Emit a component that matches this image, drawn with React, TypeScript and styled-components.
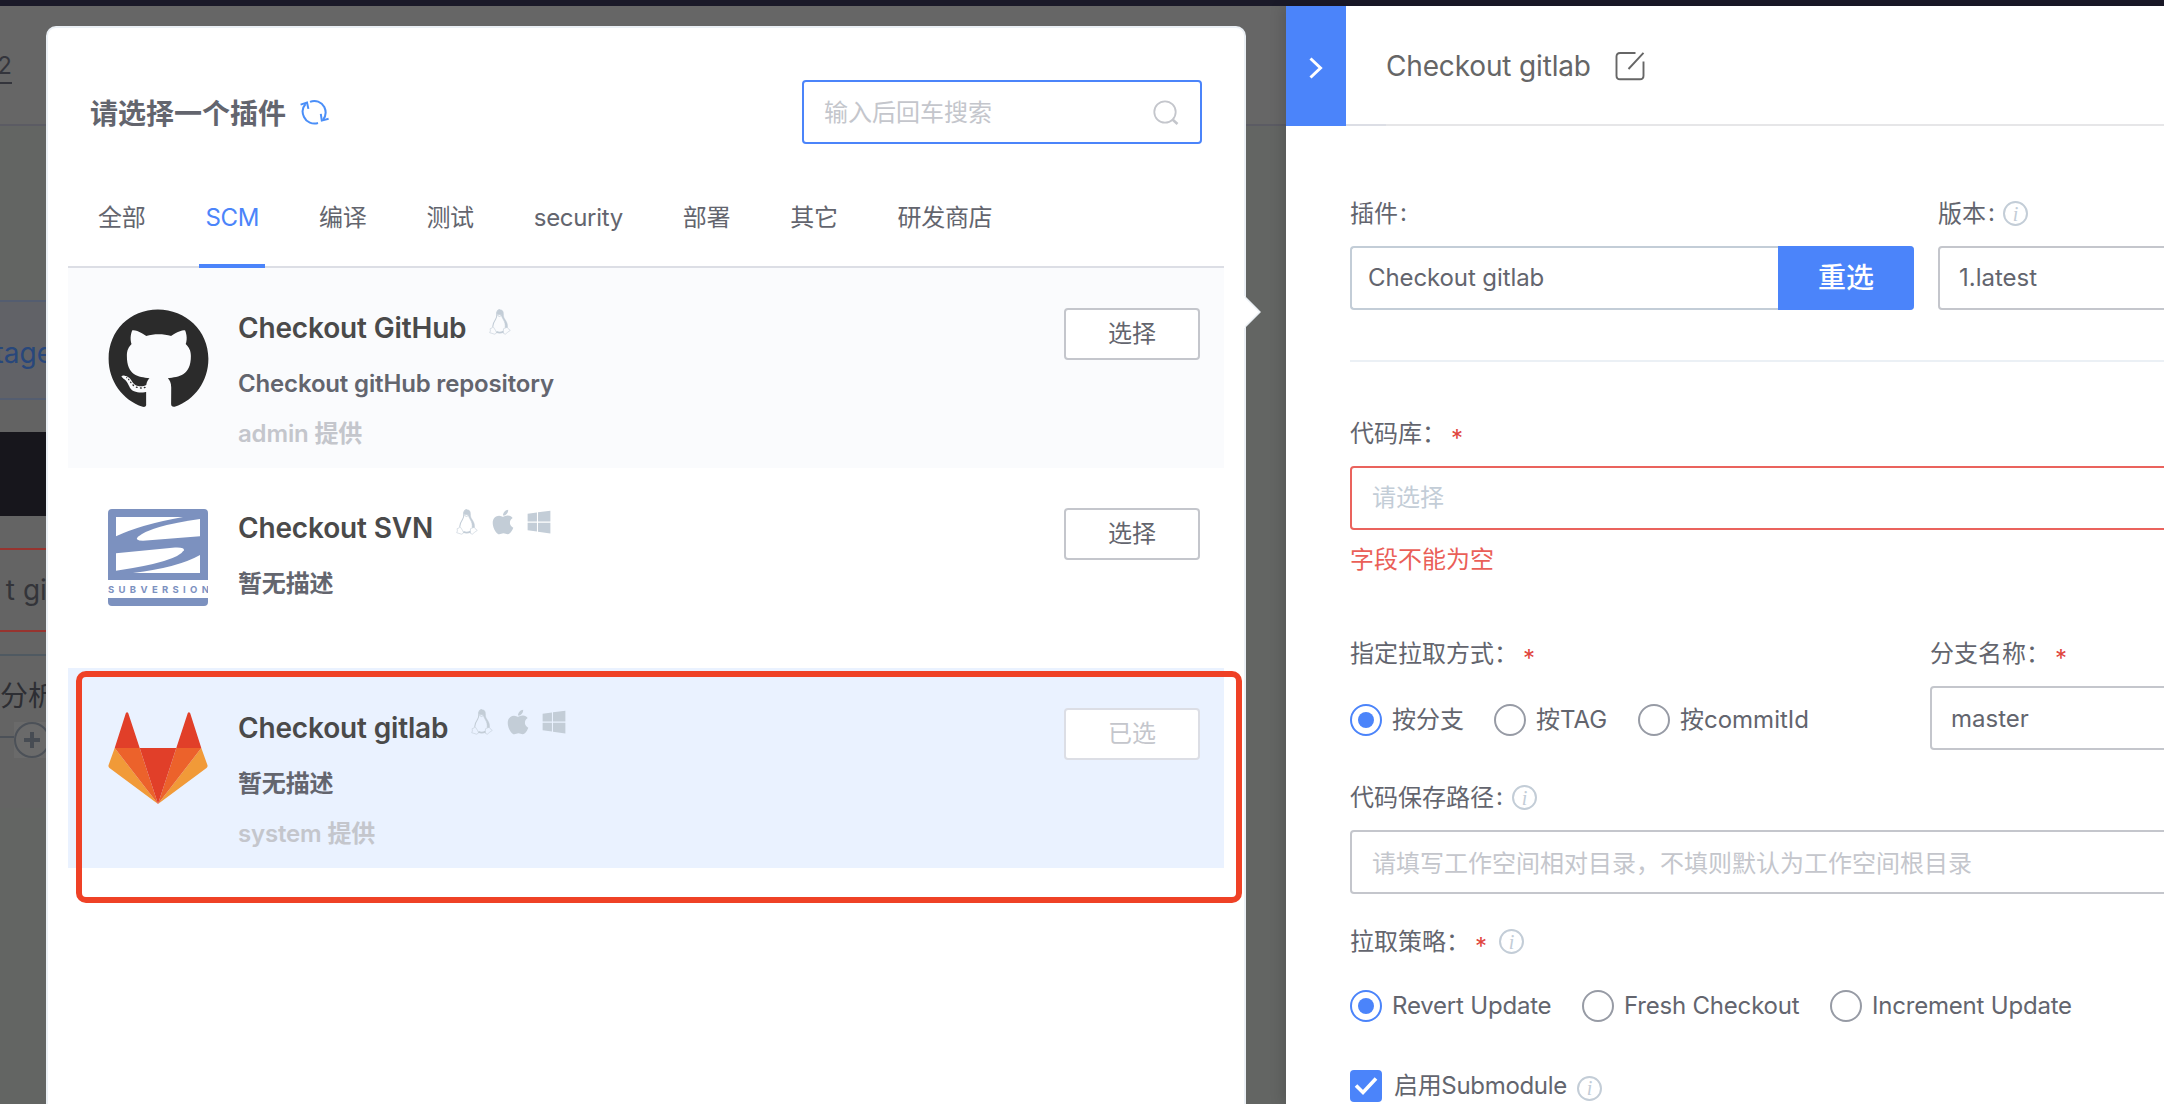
import React from "react";
import styled, { createGlobalStyle, css } from "styled-components";
import { FaApple, FaGithub, FaWindows } from "react-icons/fa";

const GlobalStyle = createGlobalStyle`
  *, *::before, *::after { box-sizing: border-box; }
  html, body { margin: 0; padding: 0; }
  body {
    font-family: Inter, "Noto Sans CJK SC", sans-serif;
    font-size: 24px;
    line-height: 24px;
    color: #63656e;
    overflow: hidden;
  }
`;

const Screen = styled.div`
  position: relative;
  width: 2164px;
  height: 1104px;
  overflow: hidden;
  background: #636563;
`;

const TopBar = styled.div`
  height: 6px;
  background: #1a1928;
`;

/* ---------- dimmed pipeline page ---------- */

const PageHeader = styled.div`
  height: 120px;
  background: #666666;
  border-bottom: 2px solid #5b5b63;
  padding-top: 46px;
`;

const PageTab = styled.span`
  display: flex;
  justify-content: flex-end;
  width: 12px;
  height: 32px;
  line-height: 27px;
  color: #34353c;
  border-bottom: 2px solid #34353c;
`;

const PageBody = styled.div`
  width: 46px;
  overflow: hidden;
  white-space: nowrap;
  font-size: 28px;
  padding-top: 174px;
`;

const Clip = styled.div`
  display: flex;
  justify-content: flex-end;
  align-items: center;
`;

const StageName = styled(Clip)`
  height: 100px;
  background: #616267;
  border: solid #545d70;
  border-width: 2px 0;
  padding-top: 6px;
  color: #28477b;
  margin-right: -7px;
`;

const StageGap = styled.div`
  height: 32px;
  background: #636363;
`;

const JobHead = styled.div`
  height: 84px;
  background: #17161c;
`;

const StageArea = styled.div`
  height: 292px;
  padding-top: 32px;
  background: #646464;
`;

const AtomFail = styled(Clip)`
  height: 84px;
  border: solid #97342f;
  border-width: 2px 0;
  color: #333439;
  margin-right: -10px;
`;

const AtomNext = styled.div`
  margin-top: 22px;
  border-top: 2px solid #4f5961;
  height: 68px;
  line-height: 80px;
  color: #2d2e33;
`;

const AddRow = styled.div`
  display: flex;
  align-items: center;
  height: 36px;
`;

const AddLine = styled.div`
  flex: none;
  width: 14px;
  height: 2px;
  margin-top: -6px;
  background: #4c5158;
`;

/* ---------- plugin selector popup ---------- */

const Popup = styled.section`
  position: absolute;
  left: 46px;
  top: 26px;
  width: 1200px;
  height: 1100px;
  padding: 52px 20px 0;
  background: #fff;
  border: 2px solid #ebf0f5;
  border-radius: 10px;
`;

const PopupArrow = styled.svg`
  position: absolute;
  right: -17px;
  top: 268px;
`;

const PopupHeader = styled.header`
  display: flex;
  align-items: center;
  height: 64px;
  padding: 0 22px 0 22px;
`;

const PopupTitle = styled.h3`
  margin: 0 14px 0 0;
  padding-top: 4px;
  font-size: 28px;
  line-height: 36px;
  font-weight: 700;
`;

const RefreshIcon = styled.svg`
  margin-top: 1px;
`;

const SearchBox = styled.div`
  display: flex;
  align-items: center;
  justify-content: space-between;
  width: 400px;
  height: 64px;
  margin-left: auto;
  padding: 2px 21px 0 20px;
  border: 2px solid #4b84fa;
  border-radius: 4px;
  color: #c4c6cc;
`;

const Tabs = styled.nav`
  display: flex;
  gap: 48px;
  height: 124px;
  padding: 24px 0 0 24px;
  border-bottom: 2px solid #dcdee5;
`;

const Tab = styled.div<{ $active?: boolean }>`
  display: flex;
  align-items: center;
  justify-content: center;
  height: 100px;
  padding: 4px 6px 0;
  letter-spacing: -0.32px;
  border-bottom: 4px solid ${(p) => (p.$active ? "#4b84fa" : "transparent")};
  color: ${(p) => (p.$active ? "#4b84fa" : "#63656e")};
`;

const Item = styled.article<{ $tone: string }>`
  display: flex;
  height: 200px;
  padding: 40px 24px 0 40px;
  background: ${(p) => p.$tone};
`;

const LogoBox = styled.div`
  width: 100px;
  height: 100px;
  display: flex;
  align-items: flex-start;
  justify-content: center;
`;

const ItemBody = styled.div`
  display: flex;
  flex-direction: column;
  flex: 1;
  padding: 3px 0 0 30px;
  font-weight: 600;
  letter-spacing: -0.16px;
`;

const ItemTitle = styled.div`
  display: flex;
  height: 34px;
  font-size: 28px;
  line-height: 34px;
  color: #4a4a4a;
`;

const OsIcons = styled.span`
  display: flex;
  gap: 12px;
  margin: -2px 0 0 22px;
  color: #c3cdd7;
`;

const OsSlot = styled.span`
  display: flex;
  align-items: center;
  justify-content: center;
  width: 24px;
  height: 26px;
`;

const ItemDesc = styled.div`
  margin-top: 27px;
  height: 24px;
`;

const ItemAuthor = styled.div`
  margin-top: 26px;
  height: 24px;
  color: #c4c6cc;
`;

const SelectButton = styled.button<{ $chosen?: boolean }>`
  width: 136px;
  height: 52px;
  padding: 0;
  font: inherit;
  background: #fff;
  border: 2px solid ${(p) => (p.$chosen ? "#dcdee5" : "#c4c6cc")};
  border-radius: 4px;
  color: ${(p) => (p.$chosen ? "#c4c6cc" : "#63656e")};
`;

const Highlight = styled.div`
  position: absolute;
  left: 76px;
  top: 671px;
  width: 1166px;
  height: 232px;
  border: 6px solid #ef4126;
  border-radius: 10px;
`;

/* ---------- right drawer ---------- */

const Drawer = styled.aside`
  position: absolute;
  left: 1286px;
  top: 6px;
  width: 1280px;
  height: 1098px;
  background: #fff;
  box-shadow: -4px 0 12px rgba(0, 0, 0, 0.13);
`;

const DrawerHeader = styled.header`
  display: flex;
  height: 120px;
`;

const Collapse = styled.div`
  display: flex;
  align-items: center;
  justify-content: center;
  width: 60px;
  padding-top: 3px;
  background: #4b84fa;
`;

const HeaderLead = styled.div`
  width: 40px;
  border-bottom: 2px solid #dcdee5;
`;

const HeaderTitle = styled.div`
  display: flex;
  align-items: center;
  flex: 1;
  gap: 24px;
  padding-top: 2px;
  border-bottom: 2px solid #e6e6e8;
  font-size: 28px;
  letter-spacing: -0.16px;
  color: #666;
`;

const Form = styled.div`
  width: 1214px;
  padding: 75px 0 0 64px;
`;

const Label = styled.div`
  display: flex;
  height: 24px;
  line-height: 26px;
  margin-bottom: 21px;
`;

const Colon = styled.span`
  margin-left: 2px;
  line-height: 23px;
`;

const Star = styled.span`
  margin: 6px 0 0 5px;
  width: 13px;
  line-height: 24px;
  color: #e0453d;
`;

const InfoMark = styled.i<{ $gap: number; $drop?: number }>`
  display: flex;
  align-items: center;
  justify-content: center;
  width: 25px;
  height: 25px;
  margin: ${(p) => p.$drop ?? 0}px 0 0 ${(p) => p.$gap}px;
  border: 2px solid #c3cdd7;
  border-radius: 50%;
  color: #c3cdd7;
  font: italic 20px/20px "Liberation Serif", serif;
`;

const frame = css`
  display: flex;
  align-items: center;
  height: 64px;
  background: #fff;
  border-radius: 4px;
`;

const Input = styled.div<{ $line?: string; $ink?: string; $drop?: number }>`
  ${frame}
  padding: ${(p) => p.$drop ?? 0}px 0 0 ${(p) => (p.$ink ? 20 : 19)}px;
  border: 2px solid ${(p) => p.$line ?? "#c4c6cc"};
  color: ${(p) => p.$ink ?? "#63656e"};
`;

const PluginRow = styled.div`
  display: grid;
  grid-template-columns: 564px 1fr;
  column-gap: 24px;
  padding-bottom: 50px;
  border-bottom: 2px solid #ebf0f5;
`;

const PluginField = styled.div`
  ${frame}
  border: 2px solid #c3cdd7;
  border-right: 0;
  padding-left: 16px;
  letter-spacing: -0.1px;
  justify-content: space-between;
`;

const Reselect = styled.button`
  width: 136px;
  height: 64px;
  border: 0;
  border-radius: 0 4px 4px 0;
  background: #4b84fa;
  color: #fff;
  font: inherit;
  font-size: 28px;
  font-weight: 500;
`;

const Field = styled.div<{ $top: number }>`
  margin-top: ${(p) => p.$top}px;
`;

const ErrorText = styled.div`
  margin-top: 17px;
  height: 24px;
  line-height: 26px;
  color: #ea5f58;
`;

const TwoCols = styled.div`
  display: grid;
  grid-template-columns: 580px 1fr;
  margin-top: 70px;
`;

const Radios = styled.div<{ $top: number; $track?: number }>`
  display: flex;
  align-items: center;
  height: 32px;
  margin-top: ${(p) => p.$top}px;
  letter-spacing: ${(p) => p.$track ?? 0}px;
`;

const RadioItem = styled.label<{ $width: number }>`
  display: flex;
  align-items: center;
  gap: 10px;
  width: ${(p) => p.$width}px;
  white-space: nowrap;
`;

const Dot = styled.span<{ $on?: boolean }>`
  display: flex;
  flex: none;
  align-items: center;
  justify-content: center;
  width: 32px;
  height: 32px;
  border: 2px solid ${(p) => (p.$on ? "#4b84fa" : "#979ba5")};
  border-radius: 50%;
  &::after {
    content: "";
    width: 16px;
    height: 16px;
    border-radius: 50%;
    background: ${(p) => (p.$on ? "#4b84fa" : "transparent")};
  }
`;

const CheckRow = styled.div`
  display: flex;
  align-items: center;
  height: 32px;
  margin-top: 48px;
  letter-spacing: -0.32px;
`;

const CheckBox = styled.span`
  display: flex;
  align-items: center;
  justify-content: center;
  width: 32px;
  height: 32px;
  margin-right: 12px;
  border-radius: 4px;
  background: #4b84fa;
`;

/* ---------- drawings ---------- */

const Linux = () => (
  <svg width="22" height="26" viewBox="0 0 22 26" fill="none" stroke="currentColor">
    <path d="M11 .8C8.600.8 7.600 2.600 7.800 5c.1 2.400 0 3.400-1.200 5.200C5 12.600 3.800 15 3.700 17.700" strokeWidth="1.100" />
    <path d="M11 .8c2.400 0 3.400 1.600 3.400 4 0 2.600.3 3.800 1.700 5.800 1.500 2.200 2.700 4.600 2.300 7.600l-2.300.4c.4-3-.3-5.400-1.700-7.800-1.200-2-1.900-3.400-2-5L9.300 5.600 7.900 4.800C7.800 2.600 8.800.8 11 .8z" fill="currentColor" strokeWidth=".5" />
    <path d="M8.300 6.300l2.100 1.200 2.400-1.200M8.600 5.400c.8-.8 2.600-.8 3.800.2" strokeWidth=".8" />
    <path d="M3.700 17.700l-.6 1.300-2 .7.300 2.200-.7 1.800 4.900 1.500 2-1.200-.8-2.200-2.400-3.700zM18.400 18.200l.7 1.400 2.200 1.800-3 2.100-2 1.700-2-.9.200-4.600z" strokeWidth=".8" opacity=".75" />
    <path d="M7.400 22.800c2 1 4.700 1 7-.2" strokeWidth="1.800" />
  </svg>
);

const GithubLogo = () => <FaGithub size={103} color="#2b2b2b" style={{ flex: "none" }} />;

const SvnLogo = () => (
  <svg width="100" height="98" viewBox="0 0 100 98" style={{ marginTop: 1 }}>
    <path d="M4 0h92q4 0 4 4v67H0V4q0-4 4-4zM0 89h100v4q0 4-4 4H4q-4 0-4-4z" fill="#7c91bf" />
    <g fill="#fff">
      <path d="M8 8h67Q33 15.500 8 27.300z" />
      <path d="M92 10v17.300L35 31.800q-9-.3-5-4Q43 16.800 92 10z" />
      <path d="M8 44.300l59-5.700q10-.4 8.800 2.600Q70 52.500 8 61.700z" />
      <path d="M92 46v18H25Q70 58.500 92 46z" />
    </g>
    <text x="0" y="83.500" textLength="101" fontFamily="Inter, sans-serif" fontSize="9.500" fontWeight="700" fill="#7c91bf">
      SUBVERSION
    </text>
  </svg>
);

const GitlabLogo = () => (
  <svg width="100" height="93" viewBox="0 0 100 93" style={{ marginTop: 4 }}>
    <path d="M6.700 36L.6 53q-.6 1.800.9 3L50 92zM93.300 36l6.100 17q.6 1.800-.9 3L50 92z" fill="#f19a38" />
    <path d="M6.700 36h25L50 92zM93.300 36h-25L50 92z" fill="#ec622b" />
    <path d="M31.700 36h36.600L50 92zM6.700 36L17.800 1.300q1.300-1.900 2.500 0L31.700 36zM93.300 36L82.200 1.300q-1.300-1.900-2.500 0L68.300 36z" fill="#e13f29" />
  </svg>
);

const platformIcons: Record<string, React.ReactNode> = {
  linux: <Linux />,
  apple: <FaApple size={28} style={{ flex: "none" }} />,
  windows: <FaWindows size={26} style={{ flex: "none" }} />,
};

/* ---------- data ---------- */

const tabs = ["全部", "SCM", "编译", "测试", "security", "部署", "其它", "研发商店"];

const plugins = [
  { name: "Checkout GitHub", desc: "Checkout gitHub repository", author: "admin 提供", os: ["linux"], logo: <GithubLogo />, tone: "#fafbfd" },
  { name: "Checkout SVN", desc: "暂无描述", author: "", os: ["linux", "apple", "windows"], logo: <SvnLogo />, tone: "#fff" },
  { name: "Checkout gitlab", desc: "暂无描述", author: "system 提供", os: ["linux", "apple", "windows"], logo: <GitlabLogo />, tone: "#eaf2ff", chosen: true },
];

const Info = ({ gap, drop }: { gap: number; drop?: number }) => (
  <InfoMark $gap={gap} $drop={drop}>i</InfoMark>
);

const Radio = ({ text, width, on }: { text: string; width: number; on?: boolean }) => (
  <RadioItem $width={width}>
    <Dot $on={on} />
    {text}
  </RadioItem>
);

export default function App() {
  return (
    <Screen>
      <GlobalStyle />
      <TopBar />
      <PageHeader>
        <PageTab>2</PageTab>
      </PageHeader>
      <PageBody>
        <StageName>tage</StageName>
        <StageGap />
        <JobHead />
        <StageArea>
          <AtomFail>t git</AtomFail>
          <AtomNext>分析</AtomNext>
          <AddRow>
            <AddLine />
            <svg width="36" height="36" viewBox="0 0 36 36" fill="none" style={{ flex: "none" }}>
              <rect width="36" height="36" fill="#6a6a6a" />
              <circle cx="18" cy="18" r="17" stroke="#4c5158" strokeWidth="2" />
              <path d="M10 18h16M18 10v16" stroke="#474c53" strokeWidth="4" />
            </svg>
          </AddRow>
        </StageArea>
      </PageBody>

      <Popup>
        <PopupArrow width="18" height="32" viewBox="0 0 18 32">
          <path d="M0 0h2v1l15 15L2 31v1H0z" fill="#fff" />
          <path d="M2 1l15 15L2 31" fill="none" stroke="#ebf0f5" strokeWidth="1.500" />
        </PopupArrow>
        <PopupHeader>
          <PopupTitle>请选择一个插件</PopupTitle>
          <RefreshIcon width="30" height="28" viewBox="0 0 30 28" fill="none" stroke="#4b8ff8" strokeWidth="2">
            <path d="M5.500 5C2.500 8.500 1.800 13.500 4 18c2.400 5.300 8.500 7.700 14 6M10 2.800c5.500-2.300 11.600 0 14.300 5.200 2 4.300 1.700 9-1.300 12.800" />
            <path d="M.6 5.600l6.400-2 1.400 6.300M28.600 19.800l-6.800 1.800-1-6.800" />
          </RefreshIcon>
          <SearchBox>
            输入后回车搜索
            <svg width="26" height="26" viewBox="0 0 26 26" fill="none" stroke="#c4c6cc">
              <circle cx="12" cy="12" r="10.700" strokeWidth="1.800" />
              <path d="M19.500 19.500l5 4.500" strokeWidth="2.600" />
            </svg>
          </SearchBox>
        </PopupHeader>
        <Tabs>
          {tabs.map((t) => (
            <Tab key={t} $active={t === "SCM"}>{t}</Tab>
          ))}
        </Tabs>
        {plugins.map((p) => (
          <Item key={p.name} $tone={p.tone}>
            <LogoBox>{p.logo}</LogoBox>
            <ItemBody>
              <ItemTitle>
                {p.name}
                <OsIcons>
                  {p.os.map((o) => (
                    <OsSlot key={o}>{platformIcons[o]}</OsSlot>
                  ))}
                </OsIcons>
              </ItemTitle>
              <ItemDesc>{p.desc}</ItemDesc>
              {p.author && <ItemAuthor>{p.author}</ItemAuthor>}
            </ItemBody>
            <SelectButton $chosen={p.chosen}>{p.chosen ? "已选" : "选择"}</SelectButton>
          </Item>
        ))}
      </Popup>

      <Drawer>
        <DrawerHeader>
          <Collapse>
            <svg width="16" height="24" viewBox="0 0 16 24" fill="none" stroke="#fff" strokeWidth="3">
              <path d="M2.500 2.500L12.500 12l-10 9.500" />
            </svg>
          </Collapse>
          <HeaderLead />
          <HeaderTitle>
            Checkout gitlab
            <svg width="30" height="30" viewBox="0 0 30 30" fill="none" stroke="#666" strokeWidth="1.900">
              <path d="M20.500 2H5Q1.500 2 1.500 5.500v19.300Q1.500 28.300 5 28.300h20q3.500 0 3.500-3.500V10.500M28.500 1.800L13.500 18" />
            </svg>
          </HeaderTitle>
        </DrawerHeader>
        <Form>
          <PluginRow>
            <div>
              <Label>插件<Colon>:</Colon></Label>
              <PluginField>
                Checkout gitlab
                <Reselect>重选</Reselect>
              </PluginField>
            </div>
            <div>
              <Label>版本<Colon>:</Colon><Info gap={8} /></Label>
              <Input>1.latest</Input>
            </div>
          </PluginRow>
          <Field $top={59}>
            <Label>代码库：<Star>*</Star></Label>
            <Input $line="#ea635d" $ink="#c3cdd7">请选择</Input>
            <ErrorText>字段不能为空</ErrorText>
          </Field>
          <TwoCols>
            <div>
              <Label>指定拉取方式：<Star>*</Star></Label>
              <Radios $top={39}>
                <Radio text="按分支" width={144} on />
                <Radio text="按TAG" width={144} />
                <Radio text="按commitId" width={180} />
              </Radios>
            </div>
            <div>
              <Label>分支名称：<Star>*</Star></Label>
              <Input $drop={2}>master</Input>
            </div>
          </TwoCols>
          <Field $top={35}>
            <Label>代码保存路径<Colon>:</Colon><Info gap={9} /></Label>
            <Input $ink="#c4c6cc" $drop={3}>请填写工作空间相对目录，不填则默认为工作空间根目录</Input>
          </Field>
          <Field $top={35}>
            <Label>拉取策略：<Star>*</Star><Info gap={11} /></Label>
            <Radios $top={37} $track={-0.2}>
              <Radio text="Revert Update" width={232} on />
              <Radio text="Fresh Checkout" width={248} />
              <Radio text="Increment Update" width={260} />
            </Radios>
          </Field>
          <CheckRow>
            <CheckBox>
              <svg width="24" height="20" viewBox="0 0 24 20" fill="none" stroke="#fff" strokeWidth="3.600">
                <path d="M2 9.500l7 7L22 2.500" />
              </svg>
            </CheckBox>
            启用Submodule
            <Info gap={10} drop={4} />
          </CheckRow>
        </Form>
      </Drawer>
      <Highlight />
    </Screen>
  );
}
